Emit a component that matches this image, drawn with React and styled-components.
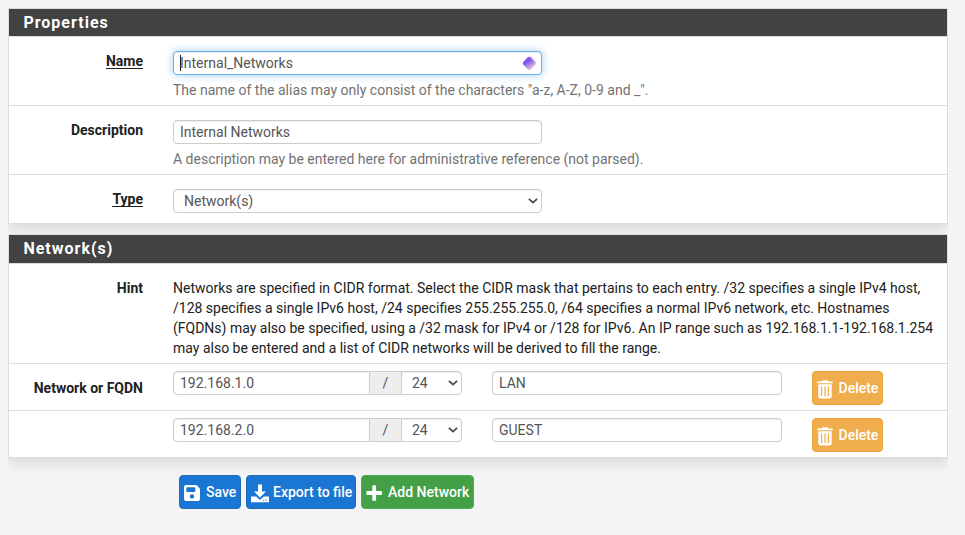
import React from "react";
import styled, { createGlobalStyle, css } from "styled-components";

const GlobalStyle = createGlobalStyle`
  * { box-sizing: border-box; }
  body {
    margin: 0;
    background: #f4f4f4;
    color: #212121;
    font: 400 14px/20px Roboto, sans-serif;
  }
`;

const Page = styled.main`
  width: 965px;
  height: 535px;
  padding: 8px 17px 0 8px;
  overflow: hidden;
`;

const Panel = styled.section`
  height: ${(p) => p.$height}px;
  margin-bottom: ${(p) => p.$gap}px;
  border: 1px solid #ddd;
  background: #fff;
  box-shadow: 0 6px 12px rgba(0, 0, 0, 0.1);
  clip-path: inset(0 0 -20px 0);
`;

const PanelTitle = styled.h2`
  height: ${(p) => p.$height}px;
  margin: 0;
  padding-left: 14.4px;
  background: #424242;
  color: #fff;
  font-size: 16px;
  font-weight: 700;
  line-height: 27px;
  letter-spacing: 1px;
`;

const Row = styled.div`
  display: flex;
  height: ${(p) => p.$height}px;
  padding-top: ${(p) => p.$top}px;
  border-top: 1px solid #ddd;
`;

const Label = styled.div`
  flex: none;
  width: 134px;
  margin-right: 30px;
  padding-top: ${(p) => p.$top || 0}px;
  text-align: right;
  font-weight: 700;

  span {
    display: inline-block;
    height: 18px;
    line-height: 20px;
    ${(p) => p.$required && css`border-bottom: 1px solid #212121;`}
  }
`;

const Field = styled.div`
  padding-top: 4px;
`;

const control = css`
  display: flex;
  align-items: center;
  height: 24px;
  border: 1px solid #ccc;
  color: #555;
  background: #fff;
  box-shadow: inset 0 1px 1px rgba(0, 0, 0, 0.075);
`;

const TextBox = styled.div`
  ${control}
  width: ${(p) => p.$width}px;
  padding: 0 4px 0 6px;
  border-radius: ${(p) => (p.$joined ? "4px 0 0 4px" : "4px")};
  ${(p) => p.$focused && css`
    justify-content: space-between;
    border-color: #66afe9;
    box-shadow: inset 0 1px 1px rgba(0, 0, 0, 0.075), 0 0 8px rgba(102, 175, 233, 0.6);
  `}
`;

const Caret = styled.span`
  display: inline-block;
  width: 1px;
  height: 16px;
  margin-right: -1px;
  background: #222;
  vertical-align: -3px;
`;

const SelectBox = styled.div`
  ${control}
  justify-content: space-between;
  width: ${(p) => p.$width}px;
  padding: 0 3px 0 10px;
  border-radius: ${(p) => (p.$joined ? "0 4px 4px 0" : "4px")};
`;

const Slash = styled.div`
  display: grid;
  place-items: center;
  width: 31px;
  height: 24px;
  border: solid #ccc;
  border-width: 1px 0;
  background: #eee;
  color: #555;
`;

const Help = styled.div`
  margin-top: 5px;
  color: #737373;
  white-space: nowrap;
`;

const Hint = styled.p`
  margin: 0;
  white-space: nowrap;
`;

const AddressGroup = styled.div`
  display: flex;
  width: 289px;
  margin-right: 30px;
`;

const tones = {
  warning: ["#f0ad4e", "#eea236"],
  primary: ["#1976d2", "#1f6cb0"],
  success: ["#43a047", "#4caf50"],
};

const Button = styled.button`
  display: flex;
  align-items: center;
  width: ${(p) => p.$width}px;
  height: 34px;
  margin: 0;
  padding: 0 0 0 4px;
  border: 1px solid ${(p) => tones[p.$tone][1]};
  border-radius: 4px;
  background: ${(p) => tones[p.$tone][0]};
  color: #fff;
  font: 500 14px/20px Roboto, sans-serif;
  white-space: nowrap;

  svg { flex: none; margin: 2px ${(p) => p.$gap}px 0 0; }
`;

const DeleteSlot = styled.div`
  margin-left: 30px;
`;

const Actions = styled.div`
  display: flex;
  gap: 5px;
  padding-left: 171px;
`;

const Chevron = () => (
  <svg width="10" height="8" viewBox="0 0 10 8" fill="none" stroke="#4a4a4a" strokeWidth="1.8">
    <path d="M.9 1.8 5 5.6 9.1 1.8" />
  </svg>
);

const TrashIcon = () => (
  <svg width="16" height="19" viewBox="0 0 16 19" fill="#fff">
    <path d="M5 .9Q5.2.3 6 .3h4q.8 0 1 .6l.3.7H15q.8 0 .8.8v.8H.2v-.8q0-.8.8-.8h3.7z" />
    <path fillRule="evenodd" d="M1.3 4.3h13.4v12q0 2.2-2.2 2.2h-9q-2.2 0-2.2-2.2zM4 6.5v9.7h1.2V6.5zm3.4 0v9.7h1.2V6.5zm3.4 0v9.7H12V6.5z" />
  </svg>
);

const SaveIcon = () => (
  <svg width="16" height="18" viewBox="0 0 16 18" fill="#fff">
    <path fillRule="evenodd" d="M2 1h9.6q.8 0 1.4.6l2.4 2.4q.6.6.6 1.4V15q0 2-2 2H2q-2 0-2-2V3q0-2 2-2zm.3 3v3.1q0 .8.8.8h7.4q.8 0 .8-.8V4q0-.8-.8-.8H3.1q-.8 0-.8.8zM8 10.2a2.2 2.2 0 1 0 0 4.4 2.2 2.2 0 0 0 0-4.4z" />
  </svg>
);

const DownloadIcon = () => (
  <svg width="18" height="19" viewBox="0 0 18 19" fill="#fff">
    <path d="M7 .5h4v7h4L9 13.5 3 7.5h4z" />
    <path fillRule="evenodd" d="M0 12.5h5.1L9 16l3.9-3.5H18v5.8H0zM12 15.8v1h1.2v-1zm2.5 0v1h1.3v-1z" />
  </svg>
);

const PlusIcon = () => (
  <svg width="16" height="18" viewBox="0 0 16 18" fill="#fff">
    <path d="M7.2 1.2h2q.9 0 .9.9v5h5q.9 0 .9.9v2q0 .9-.9.9h-5v5q0 .9-.9.9h-2q-.9 0-.9-.9v-5h-5q-.9 0-.9-.9V8q0-.9.9-.9h5v-5q0-.9.9-.9z" />
  </svg>
);

const AliasIcon = () => (
  <svg width="15" height="15" viewBox="0 0 15 15">
    <defs>
      <linearGradient id="front" x1=".25" y1="0" x2=".75" y2="1">
        <stop offset="0" stopColor="#8257f5" />
        <stop offset=".35" stopColor="#8055f2" />
        <stop offset=".65" stopColor="#b08ce8" />
        <stop offset="1" stopColor="#ffd3b8" />
      </linearGradient>
    </defs>
    <path d="M7.5.8q1.2-.8 2.3.3l4 4.7q1 1.2 0 2.4l-4.6 5q-1.2 1.1-2.4 0z" fill="#d3bef3" />
    <path d="M5.7 1.3q1.2-1 2.4 0l4 4.5q.9 1.2-.1 2.4l-4 4.8q-1.2 1.3-2.4 0L1.2 8.5q-1-1.2 0-2.4z" fill="url(#front)" />
  </svg>
);

const networks = [
  { label: "Network or FQDN", address: "192.168.1.0", mask: "24", description: "LAN" },
  { label: "", address: "192.168.2.0", mask: "24", description: "GUEST" },
];

export default function App() {
  return (
    <>
      <GlobalStyle />
      <Page>
        <Panel $height={216} $gap={10}>
          <PanelTitle $height={27}>Properties</PanelTitle>
          <Row $height={69} $top={10}>
            <Label $top={4} $required><span>Name</span></Label>
            <Field>
              <TextBox $width={369} $focused>
                <span><Caret />Internal_Networks</span>
                <AliasIcon />
              </TextBox>
              <Help>The name of the alias may only consist of the characters "a-z, A-Z, 0-9 and _".</Help>
            </Field>
          </Row>
          <Row $height={69} $top={10}>
            <Label $top={4}><span>Description</span></Label>
            <Field>
              <TextBox $width={369}>Internal Networks</TextBox>
              <Help>A description may be entered here for administrative reference (not parsed).</Help>
            </Field>
          </Row>
          <Row $height={49} $top={10}>
            <Label $top={4} $required><span>Type</span></Label>
            <Field>
              <SelectBox $width={369}>Network(s)<Chevron /></SelectBox>
            </Field>
          </Row>
        </Panel>

        <Panel $height={224} $gap={17}>
          <PanelTitle $height={28}>Network(s)</PanelTitle>
          <Row $height={100} $top={14}>
            <Label><span>Hint</span></Label>
            <Hint>
              Networks are specified in CIDR format. Select the CIDR mask that pertains to each entry. /32 specifies a single IPv4 host,<br />
              /128 specifies a single IPv6 host, /24 specifies 255.255.255.0, /64 specifies a normal IPv6 network, etc. Hostnames<br />
              (FQDNs) may also be specified, using a /32 mask for IPv4 or /128 for IPv6. An IP range such as 192.168.1.1-192.168.1.254<br />
              may also be entered and a list of CIDR networks will be derived to fill the range.
            </Hint>
          </Row>
          {networks.map((network) => (
            <Row key={network.address} $height={47} $top={7}>
              <Label $top={7}><span>{network.label}</span></Label>
              <AddressGroup>
                <TextBox $width={197} $joined>{network.address}</TextBox>
                <Slash>/</Slash>
                <SelectBox $width={61} $joined>{network.mask}<Chevron /></SelectBox>
              </AddressGroup>
              <TextBox $width={290}>{network.description}</TextBox>
              <DeleteSlot>
                <Button $tone="warning" $width={71} $gap={5.5}><TrashIcon />Delete</Button>
              </DeleteSlot>
            </Row>
          ))}
        </Panel>

        <Actions>
          <Button $tone="primary" $width={62} $gap={6}><SaveIcon />Save</Button>
          <Button $tone="primary" $width={110} $gap={4}><DownloadIcon />Export to file</Button>
          <Button $tone="success" $width={113} $gap={6}><PlusIcon />Add Network</Button>
        </Actions>
      </Page>
    </>
  );
}
